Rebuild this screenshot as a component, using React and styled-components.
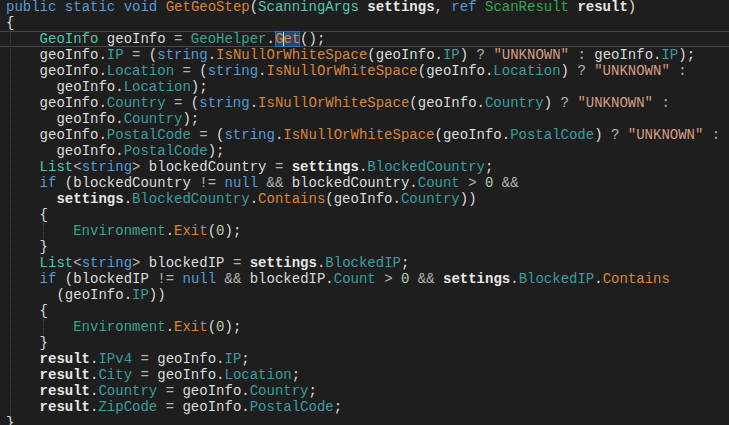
import React from 'react';
import styled, { createGlobalStyle, css } from 'styled-components';

const GlobalStyle = createGlobalStyle`
  html, body {
    margin: 0;
    padding: 0;
    background: #1e1e1e;
  }
  body {
    width: 729px;
    height: 425px;
    overflow: hidden;
  }
`;

const colors = {
  plain: '#dcdcdc',
  kw: '#569cd6',
  type: '#4ec9b0',
  sclass: '#3aa68f',
  struct: '#34a852',
  method: '#d9853a',
  prop: '#3a9e9e',
  str: '#d69d85',
  num: '#b5cea8',
  op: '#b4b4b4',
  param: '#e8e8e8',
};

const Editor = styled.div`
  margin-top: -1px;
  font-family: 'Liberation Mono', 'DejaVu Sans Mono', monospace;
  font-size: 14px;
  line-height: 16px;
  color: ${colors.plain};
  white-space: pre;
`;

const Line = styled.div`
  height: 16px;
  padding-left: 6px;
  ${({ $current }) =>
    $current &&
    css`
      box-shadow: inset 0 1px #464646, inset 0 -1px #464646;
    `}
`;

/* scope block, draws the dotted indent guide on its left */
const Block = styled.div`
  position: relative;
  &::before {
    content: '';
    position: absolute;
    top: 0;
    bottom: 0;
    left: ${({ $guide }) => $guide}px;
    border-left: 1px dotted ${({ $color }) => $color};
  }
`;

const Token = styled.span`
  color: ${({ $kind }) => colors[$kind] || colors.plain};
  ${({ $kind }) => $kind === 'param' && 'font-weight: bold;'}
`;

const Selection = styled.span`
  display: inline-block;
  height: 16px;
  vertical-align: top;
  background: #1c4a75;
  box-shadow: inset 0 0 0 1px #3a6fa8;
`;

const Caret = styled.span`
  display: inline-block;
  width: 1px;
  height: 14px;
  margin-right: -1px;
  vertical-align: -3px;
  background: #e0e0e0;
`;

const KEYWORDS = new Set(['public', 'static', 'void', 'ref', 'string', 'null', 'if']);
const NAMES = {
  GeoInfo: 'type',
  ScanningArgs: 'type',
  List: 'type',
  GeoHelper: 'sclass',
  Environment: 'sclass',
  ScanResult: 'struct',
  GetGeoStep: 'method',
  IsNullOrWhiteSpace: 'method',
  Get: 'method',
  Contains: 'method',
  Exit: 'method',
  settings: 'param',
  result: 'param',
};

const tokenize = (src) => {
  const out = [];
  const re = /("[^"]*")|(\d+)|([A-Za-z_]\w*)|(\s+)|([=!<>?:&]+)|(.)/g;
  let prev = '';
  let m;
  while ((m = re.exec(src))) {
    const [text, str, num, word, space, op] = m;
    let kind = 'plain';
    if (str) kind = 'str';
    else if (num) kind = 'num';
    else if (word) {
      if (KEYWORDS.has(word)) kind = 'kw';
      else if (NAMES[word]) kind = NAMES[word];
      else if (prev === '.') kind = 'prop';
    } else if (op) kind = 'op';
    if (!space) prev = text;
    out.push({ kind, text });
  }
  return out;
};

const CodeLine = ({ src, current }) => (
  <Line $current={current}>
    {tokenize(src).map((t, i) =>
      current && t.text === 'Get' ? (
        <Selection key={i}>
          <Token $kind="method">G</Token>
          <Caret />
          <Token $kind="method">et</Token>
        </Selection>
      ) : (
        <Token key={i} $kind={t.kind}>
          {t.text}
        </Token>
      )
    )}
  </Line>
);

const firstPart = [
  '    geoInfo.IP = (string.IsNullOrWhiteSpace(geoInfo.IP) ? "UNKNOWN" : geoInfo.IP);',
  '    geoInfo.Location = (string.IsNullOrWhiteSpace(geoInfo.Location) ? "UNKNOWN" :',
  '      geoInfo.Location);',
  '    geoInfo.Country = (string.IsNullOrWhiteSpace(geoInfo.Country) ? "UNKNOWN" :',
  '      geoInfo.Country);',
  '    geoInfo.PostalCode = (string.IsNullOrWhiteSpace(geoInfo.PostalCode) ? "UNKNOWN" :',
  '      geoInfo.PostalCode);',
  '    List<string> blockedCountry = settings.BlockedCountry;',
  '    if (blockedCountry != null && blockedCountry.Count > 0 &&',
  '      settings.BlockedCountry.Contains(geoInfo.Country))',
  '    {',
];

const secondPart = [
  '    }',
  '    List<string> blockedIP = settings.BlockedIP;',
  '    if (blockedIP != null && blockedIP.Count > 0 && settings.BlockedIP.Contains',
  '      (geoInfo.IP))',
  '    {',
];

const lastPart = [
  '    }',
  '    result.IPv4 = geoInfo.IP;',
  '    result.City = geoInfo.Location;',
  '    result.Country = geoInfo.Country;',
  '    result.ZipCode = geoInfo.PostalCode;',
];

const exitLine = '        Environment.Exit(0);';

const App = () => (
  <>
    <GlobalStyle />
    <Editor>
      <CodeLine src="public static void GetGeoStep(ScanningArgs settings, ref ScanResult result)" />
      <CodeLine src="{" />
      <Block $guide={10} $color="#2e4a66">
        <CodeLine src="    GeoInfo geoInfo = GeoHelper.Get();" current />
        {firstPart.map((s, i) => (
          <CodeLine key={`a${i}`} src={s} />
        ))}
        <Block $guide={43} $color="#2f5e3e">
          <CodeLine src={exitLine} />
        </Block>
        {secondPart.map((s, i) => (
          <CodeLine key={`b${i}`} src={s} />
        ))}
        <Block $guide={43} $color="#2f5e3e">
          <CodeLine src={exitLine} />
        </Block>
        {lastPart.map((s, i) => (
          <CodeLine key={`c${i}`} src={s} />
        ))}
      </Block>
      <CodeLine src="}" />
    </Editor>
  </>
);

export default App;
